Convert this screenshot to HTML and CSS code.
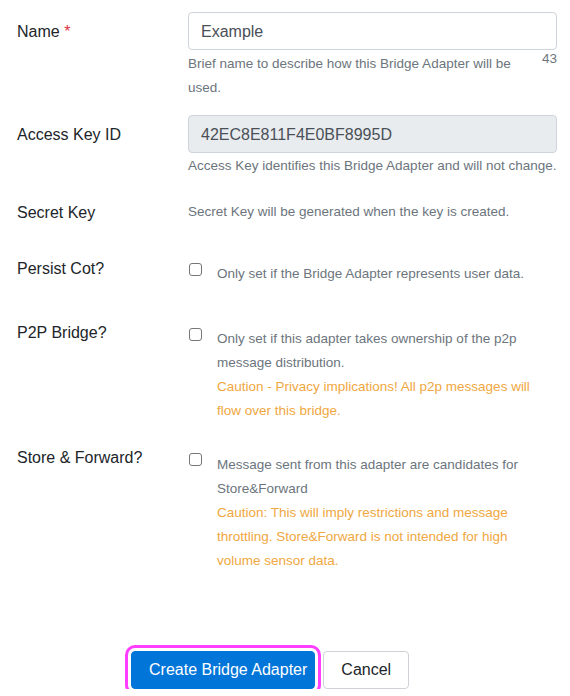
FILE: index.html
```html
<!DOCTYPE html>
<html lang="en">
<head>
<meta charset="utf-8">
<title>Create Bridge Adapter</title>
<link rel="stylesheet" href="styles.css">
</head>
<body>
<form class="form">
  <div class="row r1">
    <label class="lbl">Name <span class="req">*</span></label>
    <div class="ctl">
      <input class="input" type="text" value="Example">
      <div class="help-row">
        <small class="help help-name">Brief name to describe how this Bridge Adapter will be used.</small>
        <span class="count">43</span>
      </div>
    </div>
  </div>
  <div class="row r2">
    <label class="lbl">Access Key ID</label>
    <div class="ctl">
      <input class="input disabled" type="text" value="42EC8E811F4E0BF8995D" disabled>
      <small class="help">Access Key identifies this Bridge Adapter and will not change.</small>
    </div>
  </div>
  <div class="row r3">
    <label class="lbl">Secret Key</label>
    <div class="ctl">
      <small class="help help-top">Secret Key will be generated when the key is created.</small>
    </div>
  </div>
  <div class="row r4">
    <label class="lbl">Persist Cot?</label>
    <div class="ctl check">
      <input class="cb" type="checkbox">
      <div class="check-text">
        <small class="help">Only set if the Bridge Adapter represents user data.</small>
      </div>
    </div>
  </div>
  <div class="row r5">
    <label class="lbl">P2P Bridge?</label>
    <div class="ctl check">
      <input class="cb" type="checkbox">
      <div class="check-text">
        <small class="help">Only set if this adapter takes ownership of the p2p message distribution.</small>
        <small class="warn">Caution - Privacy implications! All p2p messages will flow over this bridge.</small>
      </div>
    </div>
  </div>
  <div class="row r6">
    <label class="lbl">Store &amp; Forward?</label>
    <div class="ctl check">
      <input class="cb" type="checkbox">
      <div class="check-text">
        <small class="help">Message sent from this adapter are candidates for Store&amp;Forward</small>
        <small class="warn">Caution: This will imply restrictions and message throttling. Store&amp;Forward is not intended for high volume sensor data.</small>
      </div>
    </div>
  </div>
  <div class="actions">
    <button type="button" class="btn btn-primary">Create Bridge Adapter</button>
    <button type="button" class="btn btn-secondary">Cancel</button>
  </div>
</form>
</body>
</html>
```
FILE: styles.css
```css
* { box-sizing: border-box; }
html, body { margin: 0; padding: 0; background: #fff; }
body {
  font-family: "Liberation Sans", Arial, Helvetica, sans-serif;
  font-size: 16px;
  line-height: 24px;
  color: #212529;
}
.form {
  padding: 12px 13px 0 17px;
  width: 570px;
}
.row {
  display: grid;
  grid-template-columns: 171px 1fr;
  align-items: start;
}
.r2 { margin-top: 15px; }
.r3 { margin-top: 16px; }
.r4 { margin-top: 25px; }
.r5 { margin-top: 28px; }
.r6 { margin-top: 16px; }
.lbl {
  display: block;
  padding-top: 7px;
  font-size: 16px;
  line-height: 24px;
  color: #212529;
}
.r1 .lbl, .r2 .lbl { padding-top: 8px; }
.req { color: #dc3545; }
.ctl { min-width: 0; }
.input {
  display: block;
  width: 100%;
  height: 38px;
  padding: 1px 12px 0;
  border: 1px solid #ced4da;
  border-radius: 4px;
  font-family: inherit;
  font-size: 16px;
  color: #495057;
  background: #fff;
  margin: 0;
}
.input.disabled { background: #e9ecef; color: #495057; opacity: 1; }
.help, .warn {
  display: block;
  font-size: 13.5px;
  line-height: 24px;
  color: #6c757d;
}
.warn { color: #f0a741; }
.input + .help { margin-top: 1px; }
.help-row { display: flex; align-items: flex-start; margin-top: 2px; }
.help-name { flex: 1; min-width: 0; }
.count {
  margin-left: 12px;
  font-size: 13.5px;
  line-height: 14px;
  color: #6c757d;
}
.help-top { padding-top: 6px; }
.check { display: flex; align-items: flex-start; }
.check-text { flex: 1; min-width: 0; padding-right: 14px; }
.r4 .check-text { padding-top: 12px; }
.r5 .check-text { padding-top: 13px; }
.r6 .check-text { padding-top: 14px; }
.cb {
  appearance: none;
  -webkit-appearance: none;
  width: 13px;
  height: 13px;
  margin: 0 15px 0 1px;
  border: 1px solid #767676;
  border-radius: 3px;
  background: #fff;
  flex: none;
}
.r4 .cb { margin-top: 13px; }
.r5 .cb { margin-top: 14px; }
.r6 .cb { margin-top: 14px; }
.actions {
  display: flex;
  gap: 8px;
  margin-top: 78px;
  padding-left: 114px;
}
.btn {
  height: 38px;
  border-radius: 4px;
  font-family: inherit;
  font-size: 16px;
  line-height: 24px;
  cursor: pointer;
}
.btn-primary {
  background: #0275d8;
  border: 1px solid #0275d8;
  color: #fff;
  padding: 0 7px 0 17px;
  outline: 3px solid #ff3dff;
  outline-offset: 3px;
}
.btn-secondary {
  background: #fff;
  border: 1px solid #cfd2d6;
  color: #212529;
  padding: 0 17px;
}
```
